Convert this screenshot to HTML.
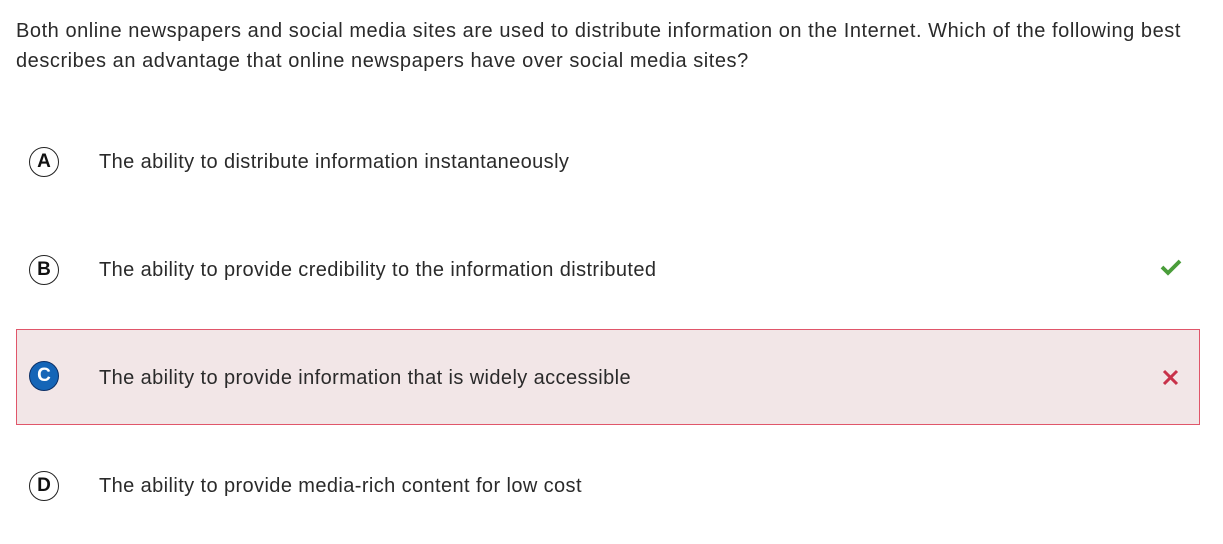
<!DOCTYPE html>
<html><head><style>
body{margin:0;width:1223px;height:544px;background:#fff;font-family:"Liberation Sans",sans-serif;color:#333;position:relative;overflow:hidden}
.q{position:absolute;left:16px;top:16px;width:1190px;font-size:20px;letter-spacing:0.55px;line-height:30px;color:#2a2a2a}
.opt{position:absolute;left:16px;width:1184px;height:94px}
.c{position:absolute;left:13px;top:32px;width:28px;height:28px;border:1.5px solid #222;border-radius:50%;font-weight:bold;font-size:19px;line-height:28px;text-align:center;color:#111;background:#fff}
.t{position:absolute;left:83px;top:35px;font-size:20px;letter-spacing:0.4px;line-height:24px;color:#2a2a2a}
.sel{background:#f2e6e7;border:1px solid #e0566a;box-sizing:border-box}
.sel .c{background:#1565b7;border-color:#0b2f66;color:#fff}
svg{position:absolute}
</style></head><body>
<div class="q">Both online newspapers and social media sites are used to distribute information on the Internet. Which of the following best describes an advantage that online newspapers have over social media sites?</div>
<div class="opt" style="top:115px"><div class="c">A</div><div class="t">The ability to distribute information instantaneously</div></div>
<div class="opt" style="top:223px"><div class="c">B</div><div class="t">The ability to provide credibility to the information distributed</div>
<svg style="left:1144px;top:36px" width="22" height="17" viewBox="0 0 22 17"><path d="M2 8l6 6L20 2" fill="none" stroke="#4a9d3a" stroke-width="3.8"/></svg></div>
<div class="opt sel" style="top:329px;height:96px"><div class="c" style="left:12px;top:31px">C</div><div class="t" style="left:82px;top:36px">The ability to provide information that is widely accessible</div>
<svg style="left:1145px;top:39px" width="17" height="17" viewBox="0 0 17 17"><path d="M2 2L15 15M15 2L2 15" stroke="#c8324a" stroke-width="3"/></svg></div>
<div class="opt" style="top:439px"><div class="c">D</div><div class="t">The ability to provide media-rich content for low cost</div></div>
</body></html>
